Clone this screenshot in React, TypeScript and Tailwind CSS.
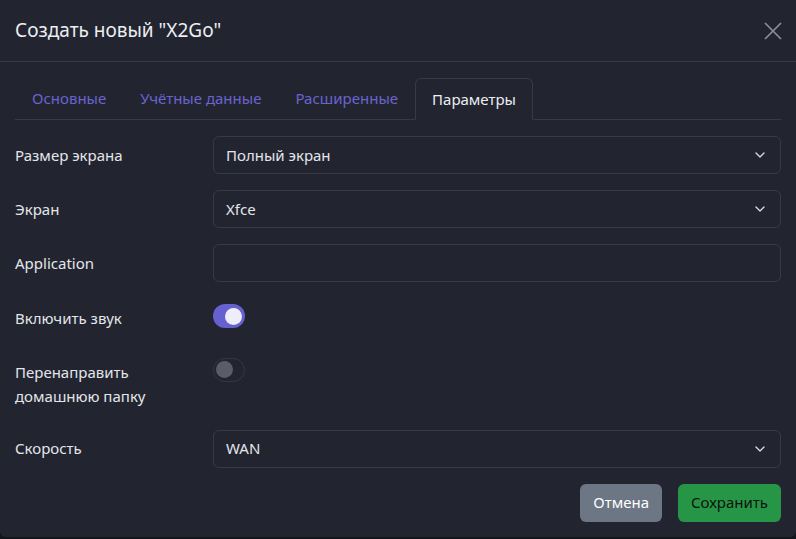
import { ChevronDown } from 'lucide-react';

const tabs = ['Основные', 'Учётные данные', 'Расширенные', 'Параметры'];

function Select({ value }: { value: string }) {
  return (
    <div className="flex h-[38px] flex-1 items-center justify-between rounded-md border border-[#363a48] px-3">
      <span>{value}</span>
      <ChevronDown size={16} strokeWidth={2} className="text-[#d8d9de]" />
    </div>
  );
}

function Toggle({ on }: { on: boolean }) {
  return (
    <div
      className={
        on
          ? 'flex h-6 w-8 items-center justify-end rounded-full bg-[#6760d0] px-[3px]'
          : 'flex h-6 w-8 items-center rounded-full border border-[#343845] px-[2px]'
      }
    >
      <div className={on ? 'h-[17px] w-[17px] rounded-full bg-[#eeeefa]' : 'h-[17px] w-[17px] rounded-full bg-[#5b5d66]'} />
    </div>
  );
}

export default function App() {
  return (
    <div className="h-[539px] w-[796px] bg-[#14161b]" style={{ fontFamily: '"Noto Sans", "Open Sans", sans-serif' }}>
      <div className="h-[537px] rounded-b-md bg-[#222530] text-[15px] text-[#e4e5ea]">
        {/* Header */}
        <div className="flex h-[62px] items-center justify-between border-b border-[#363a48] pl-[15px] pr-[14px]">
          <h1 className="text-[19px] font-normal text-[#eceef2]">Создать новый "X2Go"</h1>
          <svg width="18" height="18" viewBox="0 0 18 18" className="text-[#8b8e98]">
            <path d="M1 1L17 17M17 1L1 17" stroke="currentColor" strokeWidth="1.7" fill="none" />
          </svg>
        </div>

        {/* Tabs */}
        <div className="mx-[15px] mt-[16px] flex border-b border-[#363a48]">
          {tabs.map((t, i) =>
            i === 3 ? (
              <div key={t} className="-mb-px flex h-[42px] items-center rounded-t-md border border-[#363a48] border-b-[#222530] px-4 text-[#eceef2]">
                {t}
              </div>
            ) : (
              <div key={t} className="flex h-[41px] items-center border border-transparent px-4 text-[#6a63cf]">
                {t}
              </div>
            )
          )}
        </div>

        {/* Form */}
        <div className="flex flex-col gap-4 px-[15px] pt-4">
          <div className="flex items-center">
            <div className="w-[198px]">Размер экрана</div>
            <Select value="Полный экран" />
          </div>
          <div className="flex items-center">
            <div className="w-[198px]">Экран</div>
            <Select value="Xfce" />
          </div>
          <div className="flex items-center">
            <div className="w-[198px]">Application</div>
            <div className="h-[38px] flex-1 rounded-md border border-[#363a48]" />
          </div>
          <div className="flex items-start pt-[6px]">
            <div className="w-[198px] pt-[3px]">Включить звук</div>
            <Toggle on />
          </div>
          <div className="flex items-start pt-[12px]">
            <div className="w-[198px] pt-[2px] leading-6">
              Перенаправить
              <br />
              домашнюю папку
            </div>
            <Toggle on={false} />
          </div>
          <div className="flex items-center pt-[6px]">
            <div className="w-[198px]">Скорость</div>
            <Select value="WAN" />
          </div>
          <div className="flex justify-end gap-4">
            <button className="h-[38px] rounded-md bg-[#6c7685] px-[13px] text-white">Отмена</button>
            <button className="h-[38px] rounded-md bg-[#269646] px-[13px] text-[#111]">Сохранить</button>
          </div>
        </div>
      </div>
    </div>
  );
}
